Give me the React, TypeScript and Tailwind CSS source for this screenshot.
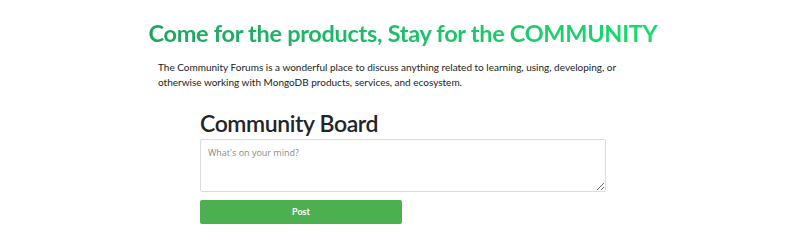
import React from 'react';

export default function App() {
  return (
    <div className="min-h-[241px] w-full bg-white font-['Lato',sans-serif]">
      <div className="flex flex-col items-center pt-[18px]">
        {/* Headline */}
        <h1 className="bg-gradient-to-r from-[#1da462] to-[#17dc6c] bg-clip-text text-[23.5px] font-bold leading-[30px] tracking-[-0.3px] text-transparent">
          Come for the products, Stay for the COMMUNITY
        </h1>

        {/* Intro */}
        <p className="mt-[12px] w-[490px] pr-[25px] text-[10px] leading-[15px] text-[#222]">
          The Community Forums is a wonderful place to discuss anything related to learning, using, developing, or otherwise working with MongoDB products, services, and ecosystem.
        </p>

        {/* Board */}
        <div className="mt-[18px] flex w-[406px] flex-col">
          <h2 className="text-[23px] font-semibold leading-[30px] tracking-[-0.4px] text-[#212529]">
            Community Board
          </h2>
          <textarea
            className="mt-[1px] h-[53px] w-full resize-y rounded-[2px] border border-[#dcdcdc] px-[7px] py-[7px] font-['Open_Sans',sans-serif] text-[9px] leading-[12px] text-[#333] placeholder:text-[#8a8a8a] outline-none"
            placeholder="What's on your mind?"
          />
          <button className="mt-[8px] h-[24px] w-[202px] rounded-[2px] bg-[#4caf50] text-[9px] font-bold text-white">
            Post
          </button>
        </div>
      </div>
    </div>
  );
}
